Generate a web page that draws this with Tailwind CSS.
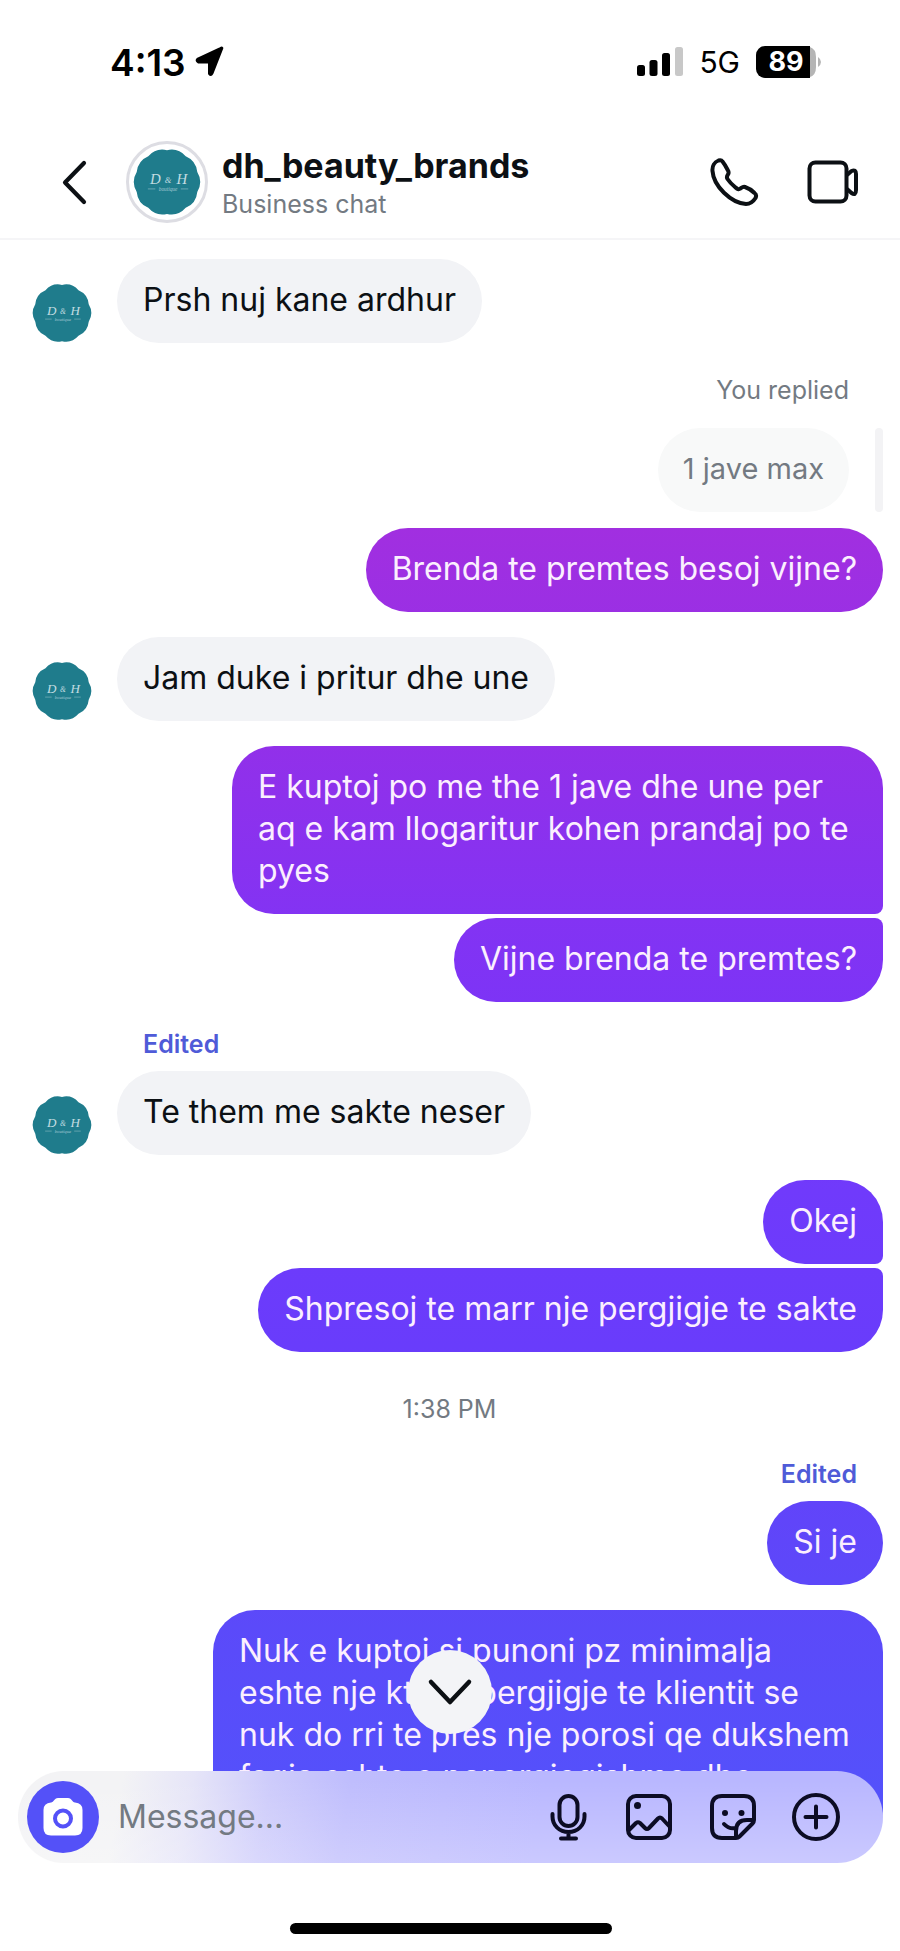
<!DOCTYPE html>
<html lang="sq">
<head>
  <meta charset="UTF-8" />
  <meta name="viewport" content="width=device-width, initial-scale=1.0" />
  <title>dh_beauty_brands</title>
  <script src="https://cdn.jsdelivr.net/npm/@tailwindcss/browser@4"></script>
  <style>
    body {
      font-family: 'Inter', 'Liberation Sans', sans-serif;
    }
    /* one gradient for the whole window, every sent bubble shows its part of it */
    .sent {
      color: #fbeffe;
      background: linear-gradient(#a12fe0 27%, #9230e9 38%, #8333f3 47%, #7c34f6 52%, #703afb 61%, #693cfb 69%, #5d48f9 81%, #5451fb 92%) fixed;
    }
  </style>
</head>
<body class="bg-white text-[#0c1014]">
  <!-- logo -->
  <svg class="hidden">
    <symbol id="logo" viewBox="0 0 64 64">
      <path fill="#1f7c8c" d="M60.5 41.3A18 18 0 0 1 49.6 56.3A18 18 0 0 1 32 62A18 18 0 0 1 14.4 56.3A18 18 0 0 1 3.5 41.3A18 18 0 0 1 3.5 22.7A18 18 0 0 1 14.4 7.7A18 18 0 0 1 32 2A18 18 0 0 1 49.6 7.7A18 18 0 0 1 60.5 22.7A18 18 0 0 1 60.5 41.3z" />
      <g fill="#c3dde1" text-anchor="middle" font-family="'Liberation Serif', serif" font-style="italic">
        <text x="21" y="34" font-size="14">D</text>
        <text x="33" y="33" font-size="8">&amp;</text>
        <text x="46" y="34" font-size="14">H</text>
        <text x="33" y="40" font-size="5" opacity=".8">boutique</text>
      </g>
      <path d="M14 38.5h7M45 38.5h7" stroke="#c3dde1" stroke-width=".7" opacity=".6" />
    </symbol>
  </svg>

  <div class="flex flex-col h-screen overflow-hidden">
    <!-- status bar -->
    <div class="flex items-center justify-between shrink-0 h-[122px] pt-0.5 pl-[110px] pr-[79px] text-black">
      <div class="flex items-center gap-2">
        <span class="text-[37px] leading-none font-semibold">4:13</span>
        <svg class="w-8 h-8" viewBox="0 0 32 32"><path d="M27.5 3 18 27.2Q17 29.500 15.500 27.500V17.500Q15.500 16 14 16H4.500Q2 14.500 4 13L26.500 2.500Q28.500 1.500 27.500 3z" fill="#000" stroke="#000" stroke-width="3" stroke-linejoin="round" /></svg>
      </div>
      <div class="flex items-center gap-4">
        <svg class="w-[46px] h-[30px]" viewBox="0 0 46 30">
          <rect x="0" y="18" width="8" height="11" rx="2.5" />
          <rect x="12.5" y="13" width="8" height="16" rx="2.5" />
          <rect x="25" y="6" width="8" height="23" rx="2.5" />
          <rect x="38" y="0" width="8" height="29" rx="2.5" fill="#c8c8c8" />
        </svg>
        <span class="text-[30px] leading-none">5G</span>
        <svg class="w-[65px] h-8" viewBox="0 0 65 32">
          <path d="M54 0H9A9 9 0 0 0 0 9V23A9 9 0 0 0 9 32H54z" />
          <path d="M54 1Q60 3 60 11V21Q60 29 54 31zM62 11Q65 13 65 16T62 21z" fill="#b5b5b5" />
          <text x="30" y="25" text-anchor="middle" font-size="27" font-weight="700" fill="#fff">89</text>
        </svg>
      </div>
    </div>

    <!-- chat header -->
    <header class="flex items-center shrink-0 h-[118px] pt-1 pl-[54px] pr-[41px] border-b-2 border-[#f5f5f7]">
      <button aria-label="Back" class="w-10 h-12 mr-8">
        <svg class="w-10 h-12" viewBox="0 0 40 48" fill="none" stroke="currentColor" stroke-width="4.2" stroke-linecap="round" stroke-linejoin="round"><path d="M30 5 11 24.5 30 44" /></svg>
      </button>
      <svg class="w-[82px] h-[82px] p-1 rounded-full border-3 border-[#dddde3]"><use href="#logo" /></svg>
      <div class="ml-[14px] pt-1 grow">
        <h1 class="text-[34px] leading-10 font-bold">dh_beauty_brands</h1>
        <p class="text-[25px] leading-9 text-[#737a82]">Business chat</p>
      </div>
      <button aria-label="Audio call" class="mr-12">
        <svg class="w-[50px] h-[50px]" viewBox="0 0 50 50" fill="none" stroke="currentColor" stroke-width="4" stroke-linejoin="round"><path d="M9.500 3.500C5.500 5 3 9 3.500 14C4.500 29 22 46 37 47C41 47 44 45 46.500 41C47.500 39 47.500 37.500 45.500 36C43 33.500 39 31 36 30C34 29.300 33 30.500 31.500 31.500C29.500 33 28.500 32 26 30C23 27.500 20.500 25 18.500 22C17.500 20.500 17.500 19.500 19 17.500C20 16 19.800 15 19 13.500C17 9.500 15.500 7 13.500 4.500C12.500 3 11 3 9.500 3.500z" /></svg>
      </button>
      <button aria-label="Video call">
        <svg class="w-[52px] h-[50px]" viewBox="0 0 52 50" fill="none" stroke="currentColor" stroke-width="4" stroke-linejoin="round"><rect x="2.5" y="5.5" width="37" height="39" rx="6" /><path d="M40 18 44.500 14Q49 12 49 17V33Q49 39 44.500 36L40 32" /></svg>
      </button>
    </header>

    <!-- messages -->
    <main class="flex flex-col grow min-h-0 overflow-hidden pt-[19px] pl-8 pr-[17px] text-[32px] leading-[42px]">
      <div class="flex items-end shrink-0 gap-[25px]">
        <svg class="w-[60px] h-[60px]"><use href="#logo" /></svg>
        <p class="px-[26px] pt-5 pb-[22px] rounded-[42px] bg-[#f2f3f6]">Prsh nuj kane ardhur</p>
      </div>

      <p class="self-end shrink-0 mt-[31px] mr-[34px] text-[25px] leading-8 text-[#737a82]">You replied</p>
      <div class="flex self-end shrink-0 gap-[26px] mt-[22px]">
        <p class="px-[25px] pt-5 pb-[22px] rounded-[42px] bg-[#f8f9f9] text-[29px] text-[#737a82]">1 jave max</p>
        <div class="w-2 rounded-sm bg-[#f3f3f5]"></div>
      </div>
      <p class="sent self-end shrink-0 mt-4 px-[26px] pt-5 pb-[22px] rounded-[42px]">Brenda te premtes besoj vijne?</p>

      <div class="flex items-end shrink-0 gap-[25px] mt-[25px]">
        <svg class="w-[60px] h-[60px]"><use href="#logo" /></svg>
        <p class="px-[26px] pt-5 pb-[22px] rounded-[42px] bg-[#f2f3f6]">Jam duke i pritur dhe une</p>
      </div>

      <p class="sent self-end shrink-0 max-w-[651px] mt-[25px] px-[26px] pt-5 pb-[22px] rounded-[42px] rounded-br-lg">E kuptoj po me the 1 jave dhe une per aq e kam llogaritur kohen prandaj po te pyes</p>
      <p class="sent self-end shrink-0 mt-1 px-[26px] pt-5 pb-[22px] rounded-[42px] rounded-tr-lg">Vijne brenda te premtes?</p>

      <p class="shrink-0 mt-[26px] ml-[111px] text-[25px] leading-8 font-semibold text-[#4f5bd8]">Edited</p>
      <div class="flex items-end shrink-0 gap-[25px] mt-[11px]">
        <svg class="w-[60px] h-[60px]"><use href="#logo" /></svg>
        <p class="px-[26px] pt-5 pb-[22px] rounded-[42px] bg-[#f2f3f6]">Te them me sakte neser</p>
      </div>

      <p class="sent self-end shrink-0 mt-[25px] px-[26px] pt-5 pb-[22px] rounded-[42px] rounded-br-lg">Okej</p>
      <p class="sent self-end shrink-0 mt-1 px-[26px] pt-5 pb-[22px] rounded-[42px] rounded-tr-lg">Shpresoj te marr nje pergjigje te sakte</p>

      <time class="shrink-0 mt-[41px] mr-4 text-center text-[25px] leading-8 text-[#737a82]">1:38 PM</time>

      <p class="self-end shrink-0 mt-[33px] mr-[26px] text-[25px] leading-8 font-semibold text-[#4f5bd8]">Edited</p>
      <p class="sent self-end shrink-0 mt-[11px] px-[26px] pt-5 pb-[22px] rounded-[42px]">Si je</p>
      <p class="sent self-end shrink-0 max-w-[670px] mt-[25px] px-[26px] pt-5 pb-[22px] rounded-[42px] rounded-br-lg">Nuk e kuptoj si punoni pz minimalja eshte nje kthim pergjigje te klientit se nuk do rri te pres nje porosi qe dukshem faqja eshte e papergjegjshme dhe</p>
    </main>

    <!-- composer, overlaps the end of the messages -->
    <footer class="relative shrink-0 -mt-[46px] pl-[18px] pr-[17px] pb-[17px]">
      <button aria-label="Scroll to latest" class="absolute -top-[121px] inset-x-0 mx-auto flex items-center justify-center w-[84px] h-[84px] rounded-full bg-[#f3f4f7]">
        <svg class="w-12 h-12" viewBox="0 0 48 48" fill="none" stroke="currentColor" stroke-width="4.5" stroke-linecap="round" stroke-linejoin="round"><path d="M5 14 24 34 43 14" /></svg>
      </button>
      <form class="flex items-center h-[92px] pl-[9px] pr-[43px] rounded-full bg-[linear-gradient(to_bottom,#ffffff00_10%,#ffffff40),linear-gradient(100deg,#f3f3f5_12%,#e6e5f8_20%,#cdcbfb_29%,#bfbdfd_38%,#b9b7ff_60%)]">
        <button type="button" aria-label="Camera" class="flex items-center justify-center shrink-0 w-[72px] h-[72px] rounded-full bg-[#5451f8]">
          <svg class="w-10 h-10" viewBox="0 0 40 40"><path fill="#fff" d="M8 5.500C11 5.500 11 1 15 1H25C29 1 29 5.500 32 5.500Q39.500 6 39.500 13V31Q39.500 38.500 32 38.500H8Q.5 38.500 .5 31V13Q.5 6 8 5.500z" /><circle cx="20" cy="21.500" r="8" fill="none" stroke="#5451f8" stroke-width="4" /></svg>
        </button>
        <input type="text" aria-label="Message" placeholder="Message..." class="grow min-w-0 ml-[19px] text-[32px] bg-transparent outline-none placeholder:text-[#737a82]" />
        <div class="flex gap-[35px] text-[#0c0c24]">
          <button type="button" aria-label="Voice message">
            <svg class="w-12 h-12" viewBox="0 0 48 48" fill="none" stroke="currentColor" stroke-width="4" stroke-linecap="round"><rect x="16.5" y="3" width="18" height="30" rx="9" /><path d="M9.500 21V23.500C9.500 32.500 16.500 39 25.500 39S41.500 32.500 41.500 23.500V21M25.500 39V45M18 45.500H33" /></svg>
          </button>
          <button type="button" aria-label="Photo">
            <svg class="w-12 h-12" viewBox="0 0 48 48" fill="none" stroke="currentColor" stroke-width="4" stroke-linejoin="round"><rect x="2" y="3" width="42" height="42" rx="8" /><circle cx="11.5" cy="12.5" r="3.5" fill="currentColor" stroke="none" /><path d="M2 38 10 30Q12 28.500 14 30L19 35Q21 37 23 35L32 25.500Q34 23.500 36 25.500L44 34" /></svg>
          </button>
          <button type="button" aria-label="Sticker">
            <svg class="w-12 h-12" viewBox="0 0 48 48" fill="none" stroke="currentColor" stroke-width="4" stroke-linecap="round" stroke-linejoin="round"><path d="M27 45H13Q3 45 3 35V13Q3 3 13 3H35Q45 3 45 13V27Q45 29 43.500 30.500L30.500 43.500Q29 45 27 45zM27 45V38Q27 27 38 27H45M15 31Q20 36.500 27 35" /><circle cx="16" cy="20" r="3" fill="currentColor" stroke="none" /><circle cx="32.5" cy="20" r="3" fill="currentColor" stroke="none" /></svg>
          </button>
          <button type="button" aria-label="More">
            <svg class="w-12 h-12" viewBox="0 0 48 48" fill="none" stroke="currentColor" stroke-width="4" stroke-linecap="round"><circle cx="24" cy="24" r="22" /><path d="M24 13.500V34.500M13.500 24H34.500" /></svg>
          </button>
        </div>
      </form>
      <div class="w-[322px] h-[11px] mx-auto mt-[60px] rounded-full bg-black"></div>
    </footer>
  </div>
</body>
</html>
